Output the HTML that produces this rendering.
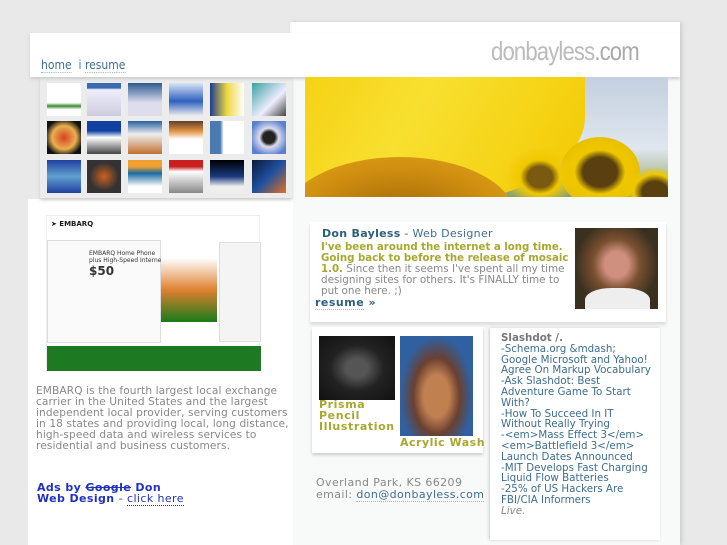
<!DOCTYPE html>
<html><head><meta charset="utf-8"><style>
*{margin:0;padding:0;box-sizing:border-box}
body{width:727px;height:545px;overflow:hidden;background:#e9e9e9;font-family:"DejaVu Sans","Liberation Sans",sans-serif;position:relative}
.a{position:absolute;white-space:nowrap}
.lnk{color:#3d6e8c;border-bottom:1px dotted #9bb}
.th{position:absolute;width:34px;height:33px}
</style></head><body>
<div class="a" style="left:290px;top:22px;width:390px;height:523px;background:#f8f9f9;box-shadow:2px 0 4px #ccc"></div>
<div class="a" style="left:292px;top:22px;width:388px;height:12px;background:#fff"></div>
<div class="a" style="left:28px;top:199px;width:265px;height:346px;background:#fff"></div>
<div class="a" style="left:40px;top:77px;width:252px;height:121px;background:#ececec;box-shadow:0 2px 3px #ccc"></div>
<div class="a" style="left:30px;top:33px;width:650px;height:44px;background:#fff;box-shadow:0 2px 3px #ccc"></div>
<div class="a" style="left:41px;top:58px;font-size:12px;color:#4a7d98;transform:scaleX(0.9);transform-origin:left"><span class="lnk">home</span> &nbsp;<span>i</span> <span class="lnk">resume</span></div>
<div class="a" style="left:491px;top:36px;font-family:'Liberation Sans',sans-serif;font-size:26px;color:#bbb;letter-spacing:-1px;transform:scaleX(0.85);transform-origin:left">donbayless<span style="color:#aaa">.com</span></div>
<div class="a" style="left:305px;top:77px;width:363px;height:120px;overflow:hidden;background:linear-gradient(180deg,#c4d0e0,#dfe6ee 60%,#8ba060)">
<div class="a" style="left:-10px;top:-20px;width:290px;height:150px;background:linear-gradient(120deg,#f5cf10,#f8e030 40%,#f3c800);border-radius:0 0 60% 10%"></div>
<div class="a" style="left:-20px;top:80px;width:230px;height:120px;border-radius:50%;background:radial-gradient(#a06808,#d19010 60%,#e0a820)"></div>
<div class="a" style="left:255px;top:60px;width:80px;height:70px;border-radius:50%;background:radial-gradient(#5a4010 30%,#f0c800 45%,#e8c000 70%,transparent 72%)"></div>
<div class="a" style="left:200px;top:70px;width:70px;height:60px;border-radius:50%;background:radial-gradient(#7a5a10 25%,#f0c800 40%,transparent 70%)"></div>
<div class="a" style="left:320px;top:90px;width:60px;height:50px;border-radius:50%;background:radial-gradient(#5a4010 30%,#f0c800 50%,transparent 72%)"></div>
</div>
<div class="th" style="left:47px;top:83px;background:linear-gradient(#fff 60%,#3a8a30 70%,#fff 80%)"></div>
<div class="th" style="left:87px;top:83px;background:linear-gradient(#3a6ab0 15%,#eef 20%,#ccd)"></div>
<div class="th" style="left:128px;top:83px;background:linear-gradient(#2d5a90,#dde 60%)"></div>
<div class="th" style="left:169px;top:83px;background:linear-gradient(#d8e4f4,#3060c0 55%,#eee)"></div>
<div class="th" style="left:210px;top:83px;background:linear-gradient(90deg,#1c3c90,#f0d840 50%,#fff)"></div>
<div class="th" style="left:252px;top:83px;background:linear-gradient(135deg,#3aa0a0,#eef 60%,#444)"></div>
<div class="th" style="left:47px;top:121px;background:radial-gradient(#d84020,#e8b050 50%,#111 80%)"></div>
<div class="th" style="left:87px;top:121px;background:linear-gradient(#1040a0 30%,#fff 50%,#444)"></div>
<div class="th" style="left:128px;top:121px;background:linear-gradient(#2860a0,#eee 40%,#c07030)"></div>
<div class="th" style="left:169px;top:121px;background:linear-gradient(#60402a,#e09040 30%,#fff 55%)"></div>
<div class="th" style="left:210px;top:121px;background:linear-gradient(90deg,#4a7ab0 30%,#fff 40%)"></div>
<div class="th" style="left:252px;top:121px;background:radial-gradient(#222 25%,#dde 40%,#5a80d0 80%)"></div>
<div class="th" style="left:47px;top:160px;background:linear-gradient(#2040a0,#60a0d0 50%,#2040a0)"></div>
<div class="th" style="left:87px;top:160px;background:radial-gradient(#d06020,#333 60%)"></div>
<div class="th" style="left:128px;top:160px;background:linear-gradient(#f0a030 20%,#1a6aa0 40%,#fff 80%)"></div>
<div class="th" style="left:169px;top:160px;background:linear-gradient(#c82020 20%,#fff 35%,#888)"></div>
<div class="th" style="left:210px;top:160px;background:linear-gradient(#000,#1a3a80 50%,#eee 80%)"></div>
<div class="th" style="left:252px;top:160px;background:linear-gradient(135deg,#0a1a3a,#2050a0 50%,#e07020)"></div>
<div class="a" style="left:46px;top:215px;width:214px;height:156px;background:#fff;border:1px solid #eee">
<div class="a" style="left:4px;top:4px;font-size:7px;font-weight:bold;color:#1a1a1a">➤ EMBARQ</div>
<div class="a" style="left:0;top:24px;width:114px;height:103px;background:#fafafa;border:1px solid #ddd"></div>
<div class="a" style="left:42px;top:34px;font-size:6px;color:#333">EMBARQ Home Phone<br>plus High-Speed Internet<br><b style="font-size:12px">$50</b></div>
<div class="a" style="left:114px;top:26px;width:56px;height:80px;background:linear-gradient(#fff 20%,#e08030 60%,#1a7a1a)"></div>
<div class="a" style="left:172px;top:26px;width:42px;height:100px;background:#f4f4f4;border:1px solid #ddd"></div>
<div class="a" style="left:0;top:130px;width:214px;height:25px;background:#1d7a22"></div>
</div>
<div class="a" style="left:36px;top:386px;font-size:10.6px;line-height:11px;letter-spacing:0.1px;color:#888">EMBARQ is the fourth largest local exchange<br>carrier in the United States and the largest<br>independent local provider, serving customers<br>in 18 states and providing local, long distance,<br>high-speed data and wireless services to<br>residential and business customers.</div>
<div class="a" style="left:37px;top:482px;font-size:11px;line-height:11px;font-weight:bold;letter-spacing:0.4px;color:#2030c0">Ads by <s>Google</s> Don<br>Web Design <span style="font-weight:normal">- <span style="border-bottom:1px dotted #2030c0">click here</span></span></div>
<div class="a" style="left:310px;top:222px;width:356px;height:100px;background:#fff;box-shadow:0 3px 3px #ddd"></div>
<div class="a" style="left:322px;top:227px;font-size:11px;letter-spacing:0.3px;color:#2d5f7e"><b>Don Bayless</b> - <span style="color:#3d6e8c">Web Designer</span></div>
<div class="a" style="left:321px;top:242px;font-size:10.4px;line-height:11px;color:#888"><b style="color:#a6a830;font-size:10.2px">I've been around the internet a long time.<br>Going back to before the release of mosaic<br>1.0.</b> Since then it seems I've spent all my time<br>designing sites for others. It's FINALLY time to<br>put one here. ;)</div>
<div class="a" style="left:315px;top:296px;font-size:11px;font-weight:bold;letter-spacing:0.5px;color:#2d5f7e"><span class="lnk" style="color:#2d5f7e">resume</span> »</div>
<div class="a" style="left:575px;top:228px;width:83px;height:81px;background:radial-gradient(ellipse at 50% 45%,#d09080 20%,#7a5030 40%,#3a3020 70%);overflow:hidden"><div class="a" style="left:10px;top:60px;width:65px;height:30px;background:#eee;border-radius:40% 40% 0 0"></div></div>
<div class="a" style="left:312px;top:327px;width:171px;height:126px;background:#fff;box-shadow:0 2px 3px #ccc"></div>
<div class="a" style="left:319px;top:336px;width:76px;height:64px;background:radial-gradient(#555 20%,#222 50%,#111)"></div>
<div class="a" style="left:319px;top:399px;font-size:11px;line-height:11px;font-weight:bold;letter-spacing:0.6px;color:#a6a830">Prisma<br>Pencil<br>Illustration</div>
<div class="a" style="left:400px;top:336px;width:73px;height:100px;background:radial-gradient(ellipse at 50% 60%,#c08050 25%,#6a4030 45%,#3060a0 70%)"></div>
<div class="a" style="left:400px;top:436px;font-size:11px;font-weight:bold;letter-spacing:0.5px;color:#a6a830">Acrylic Wash</div>
<div class="a" style="left:316px;top:477px;font-size:11px;line-height:12px;letter-spacing:0.4px;color:#888">Overland Park, KS 66209<br>email: <span class="lnk">don@donbayless.com</span></div>
<div class="a" style="left:490px;top:328px;width:170px;height:212px;background:#fff;box-shadow:-1px 0 3px #ccc"></div>
<div class="a" style="left:501px;top:333px;font-size:10.3px;line-height:10.8px;color:#3d6e8c"><b style="color:#777">Slashdot /.</b><br>-Schema.org &amp;mdash;<br>Google Microsoft and Yahoo!<br>Agree On Markup Vocabulary<br>-Ask Slashdot: Best<br>Adventure Game To Start<br>With?<br>-How To Succeed In IT<br>Without Really Trying<br>-&lt;em&gt;Mass Effect 3&lt;/em&gt;<br>&lt;em&gt;Battlefield 3&lt;/em&gt;<br>Launch Dates Announced<br>-MIT Develops Fast Charging<br>Liquid Flow Batteries<br>-25% of US Hackers Are<br>FBI/CIA Informers<br><i style="color:#888">Live.</i></div>
</body></html>
